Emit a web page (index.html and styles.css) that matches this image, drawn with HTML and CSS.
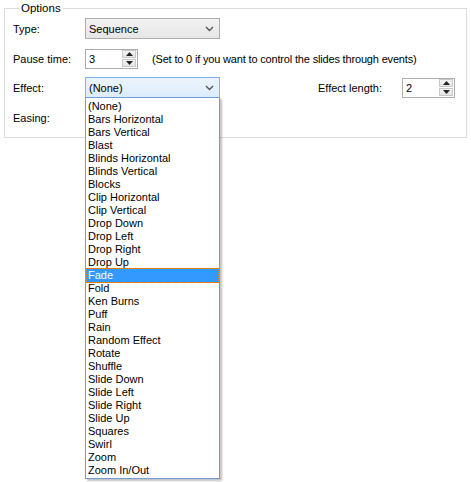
FILE: index.html
```html
<!DOCTYPE html>
<html>
<head>
<meta charset="utf-8">
<link rel="stylesheet" href="styles.css">
</head>
<body>
<fieldset class="group">
  <legend class="legend">Options</legend>
  <div class="row row-type">
    <span class="label">Type:</span>
    <div class="select">
      <span class="select-text">Sequence</span>
      <svg class="chev" width="9" height="6" viewBox="0 0 9 6"><path d="M1 1 L4.5 4.5 L8 1" fill="none" stroke="#555" stroke-width="1.4"/></svg>
    </div>
  </div>
  <div class="row row-pause">
    <span class="label">Pause time:</span>
    <div class="spin">
      <span class="spin-text">3</span>
      <div class="spin-btns">
        <span class="spin-btn"><svg width="7" height="4" viewBox="0 0 7 4"><path d="M0 4 L3.5 0 L7 4 Z" fill="#222"/></svg></span>
        <span class="spin-btn"><svg width="7" height="4" viewBox="0 0 7 4"><path d="M0 0 L3.5 4 L7 0 Z" fill="#222"/></svg></span>
      </div>
    </div>
    <span class="hint">(Set to 0 if you want to control the slides through events)</span>
  </div>
  <div class="row row-effect">
    <span class="label">Effect:</span>
    <div class="select select-focus">
      <span class="select-text">(None)</span>
      <svg class="chev" width="9" height="6" viewBox="0 0 9 6"><path d="M1 1 L4.5 4.5 L8 1" fill="none" stroke="#555" stroke-width="1.4"/></svg>
      <ul class="dropdown">
        <li>(None)</li>
        <li>Bars Horizontal</li>
        <li>Bars Vertical</li>
        <li>Blast</li>
        <li>Blinds Horizontal</li>
        <li>Blinds Vertical</li>
        <li>Blocks</li>
        <li>Clip Horizontal</li>
        <li>Clip Vertical</li>
        <li>Drop Down</li>
        <li>Drop Left</li>
        <li>Drop Right</li>
        <li>Drop Up</li>
        <li class="selected">Fade</li>
        <li>Fold</li>
        <li>Ken Burns</li>
        <li>Puff</li>
        <li>Rain</li>
        <li>Random Effect</li>
        <li>Rotate</li>
        <li>Shuffle</li>
        <li>Slide Down</li>
        <li>Slide Left</li>
        <li>Slide Right</li>
        <li>Slide Up</li>
        <li>Squares</li>
        <li>Swirl</li>
        <li>Zoom</li>
        <li>Zoom In/Out</li>
      </ul>
    </div>
    <span class="label label-length">Effect length:</span>
    <div class="spin">
      <span class="spin-text">2</span>
      <div class="spin-btns">
        <span class="spin-btn"><svg width="7" height="4" viewBox="0 0 7 4"><path d="M0 4 L3.5 0 L7 4 Z" fill="#222"/></svg></span>
        <span class="spin-btn"><svg width="7" height="4" viewBox="0 0 7 4"><path d="M0 0 L3.5 4 L7 0 Z" fill="#222"/></svg></span>
      </div>
    </div>
  </div>
  <div class="row row-easing">
    <span class="label">Easing:</span>
  </div>
</fieldset>
</body>
</html>
```

FILE: styles.css
```css
html, body {
  margin: 0;
  padding: 0;
  background: #ffffff;
}
body {
  font-family: "Liberation Sans", Arial, sans-serif;
  font-size: 11px;
  color: #000;
  width: 471px;
  height: 482px;
  overflow: hidden;
}
.group {
  margin: 2px 0 0 4px;
  width: 463px;
  height: 136px;
  box-sizing: border-box;
  border: 1px solid #dcdcdc;
  padding: 4px 0 0 8px;
  display: flex;
  flex-direction: column;
}
.legend {
  padding: 0 2px;
  margin-left: 6px;
  line-height: 12px;
  font-size: 11.5px;
}
.row {
  display: flex;
  align-items: center;
  height: 21px;
}
.row-pause { margin-top: 9px; }
.row-effect { margin-top: 8px; }
.row-easing { margin-top: 9px; }
.label {
  width: 72px;
  flex: none;
}
.select {
  position: relative;
  width: 135px;
  height: 21px;
  box-sizing: border-box;
  border: 1px solid #adadad;
  background: linear-gradient(#f2f2f2, #e6e6e6);
  display: flex;
  align-items: center;
  padding-left: 3px;
}
.select-text { flex: 1; }
.chev { margin-right: 5px; }
.select-focus {
  border-color: #7eb4ea;
  background: linear-gradient(#ecf4fc, #dcecfc);
}
.spin {
  width: 53px;
  height: 20px;
  box-sizing: border-box;
  border: 1px solid #abadb3;
  display: flex;
  align-items: center;
  padding-left: 3px;
  background: #fff;
}
.spin-text { flex: 1; }
.spin-btns {
  display: flex;
  flex-direction: column;
  gap: 1px;
  margin-right: 1px;
}
.spin-btn {
  width: 14px;
  height: 8px;
  box-sizing: border-box;
  border: 1px solid #c9c9c9;
  background: linear-gradient(#f4f4f4, #e4e4e4);
  display: flex;
  align-items: center;
  justify-content: center;
}
.hint {
  margin-left: 14px;
  letter-spacing: -0.17px;
}
.label-length {
  margin-left: 98px;
  width: 84px;
}
.dropdown {
  position: absolute;
  left: -1px;
  top: 19px;
  width: 135px;
  box-sizing: border-box;
  margin: 0;
  padding: 2px 0 1px 0;
  list-style: none;
  background: #fff;
  border: 1px solid #6f9fd6;
  box-shadow: 2px 2px 2px rgba(0,0,0,0.25);
  z-index: 2;
}
.dropdown li {
  height: 13px;
  line-height: 13px;
  padding-left: 2px;
  white-space: nowrap;
}
.dropdown li.selected {
  background: #3399ff;
  color: #fff;
  border: 1px dotted #f0841c;
  margin: -1px 0;
  padding-left: 1px;
  line-height: 13px;
  height: 13px;
}
```
